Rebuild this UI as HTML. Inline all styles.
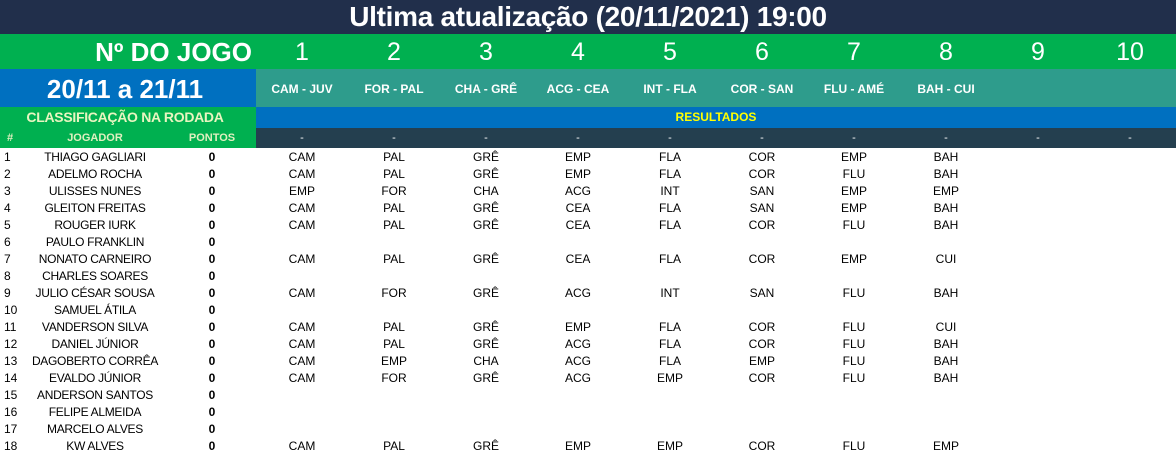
<!DOCTYPE html>
<html><head><meta charset="utf-8"><style>
body{margin:0;width:1176px;height:458px;overflow:hidden;background:#fff;font-family:"Liberation Sans",Arial,sans-serif;position:relative}
.b{position:absolute}
.c{position:absolute;text-align:center;white-space:nowrap}
</style></head><body>
<div class="b" style="left:0;top:0;width:1176px;height:34px;background:#212f4b"></div>
<div class="c" style="left:0;top:0;width:1176px;line-height:33px;color:#fff;font-weight:bold;font-size:28px;letter-spacing:-0.3px">Ultima atualização (20/11/2021) 19:00</div>
<div class="b" style="left:0;top:34px;width:1176px;height:35px;background:#00b050"></div>
<div class="c" style="left:0;top:34px;width:252px;text-align:right;line-height:36px;color:#fff;font-weight:bold;font-size:26px">Nº DO JOGO</div>
<div class="b" style="left:0;top:69px;width:256px;height:38px;background:#0070c0"></div>
<div class="c" style="left:0;top:69px;width:250px;line-height:40px;color:#fff;font-weight:bold;font-size:26px">20/11 a 21/11</div>
<div class="b" style="left:256px;top:69px;width:920px;height:38px;background:#2e9c8c"></div>
<div class="b" style="left:0;top:107px;width:256px;height:41px;background:#00b050"></div>
<div class="c" style="left:0;top:107px;width:250px;line-height:21px;color:#e8f5c0;font-weight:bold;font-size:14px;letter-spacing:-0.3px">CLASSIFICAÇÃO NA RODADA</div>
<div class="b" style="left:256px;top:107px;width:920px;height:21px;background:#0070c0"></div>
<div class="c" style="left:256px;top:107px;width:920px;line-height:21px;color:#ffff00;font-weight:bold;font-size:12px">RESULTADOS</div>
<div class="b" style="left:256px;top:128px;width:920px;height:20px;background:#243f4f"></div>
<div class="c" style="left:0;top:128px;width:20px;line-height:20px;color:#e0f0c0;font-weight:bold;font-size:11px">#</div>
<div class="c" style="left:45px;top:128px;width:100px;line-height:20px;color:#e0f0c0;font-weight:bold;font-size:11px">JOGADOR</div>
<div class="c" style="left:172px;top:128px;width:80px;line-height:20px;color:#e0f0c0;font-weight:bold;font-size:11px">PONTOS</div>
<div id="g"></div>
<script>
var games=["CAM - JUV","FOR - PAL","CHA - GRÊ","ACG - CEA","INT - FLA","COR - SAN","FLU - AMÉ","BAH - CUI","",""];
var h="";
for(var i=0;i<10;i++){var x=256+i*92;
h+='<div class="c" style="left:'+x+'px;top:34px;width:92px;line-height:36px;color:#fff;font-size:25px">'+(i+1)+'</div>';
h+='<div class="c" style="left:'+x+'px;top:69px;width:92px;line-height:40px;color:#fff;font-weight:bold;font-size:12px">'+games[i]+'</div>';
h+='<div class="c" style="left:'+x+'px;top:128px;width:92px;line-height:20px;color:#fff;font-size:11px">-</div>';}
var rows=[["THIAGO GAGLIARI","CAM PAL GRÊ EMP FLA COR EMP BAH"],["ADELMO ROCHA","CAM PAL GRÊ EMP FLA COR FLU BAH"],["ULISSES NUNES","EMP FOR CHA ACG INT SAN EMP EMP"],["GLEITON FREITAS","CAM PAL GRÊ CEA FLA SAN EMP BAH"],["ROUGER IURK","CAM PAL GRÊ CEA FLA COR FLU BAH"],["PAULO FRANKLIN",""],["NONATO CARNEIRO","CAM PAL GRÊ CEA FLA COR EMP CUI"],["CHARLES SOARES",""],["JULIO CÉSAR SOUSA","CAM FOR GRÊ ACG INT SAN FLU BAH"],["SAMUEL ÁTILA",""],["VANDERSON SILVA","CAM PAL GRÊ EMP FLA COR FLU CUI"],["DANIEL JÚNIOR","CAM PAL GRÊ ACG FLA COR FLU BAH"],["DAGOBERTO CORRÊA","CAM EMP CHA ACG FLA EMP FLU BAH"],["EVALDO JÚNIOR","CAM FOR GRÊ ACG EMP COR FLU BAH"],["ANDERSON SANTOS",""],["FELIPE ALMEIDA",""],["MARCELO ALVES",""],["KW ALVES","CAM PAL GRÊ EMP EMP COR FLU EMP"]];
for(var r=0;r<rows.length;r++){var y=149+r*17;
h+='<div class="b" style="left:4px;top:'+y+'px;line-height:17px;font-size:12px">'+(r+1)+'</div>';
h+='<div class="c" style="left:20px;top:'+y+'px;width:150px;line-height:17px;font-size:12px;letter-spacing:-0.3px">'+rows[r][0]+'</div>';
h+='<div class="c" style="left:192px;top:'+y+'px;width:40px;line-height:17px;font-size:12px;font-weight:bold">0</div>';
if(rows[r][1]){var p=rows[r][1].split(" ");for(var i=0;i<p.length;i++)
h+='<div class="c" style="left:'+(256+i*92)+'px;top:'+y+'px;width:92px;line-height:17px;font-size:12px">'+p[i]+'</div>';}}
document.getElementById("g").innerHTML=h;
</script>
</body></html>
